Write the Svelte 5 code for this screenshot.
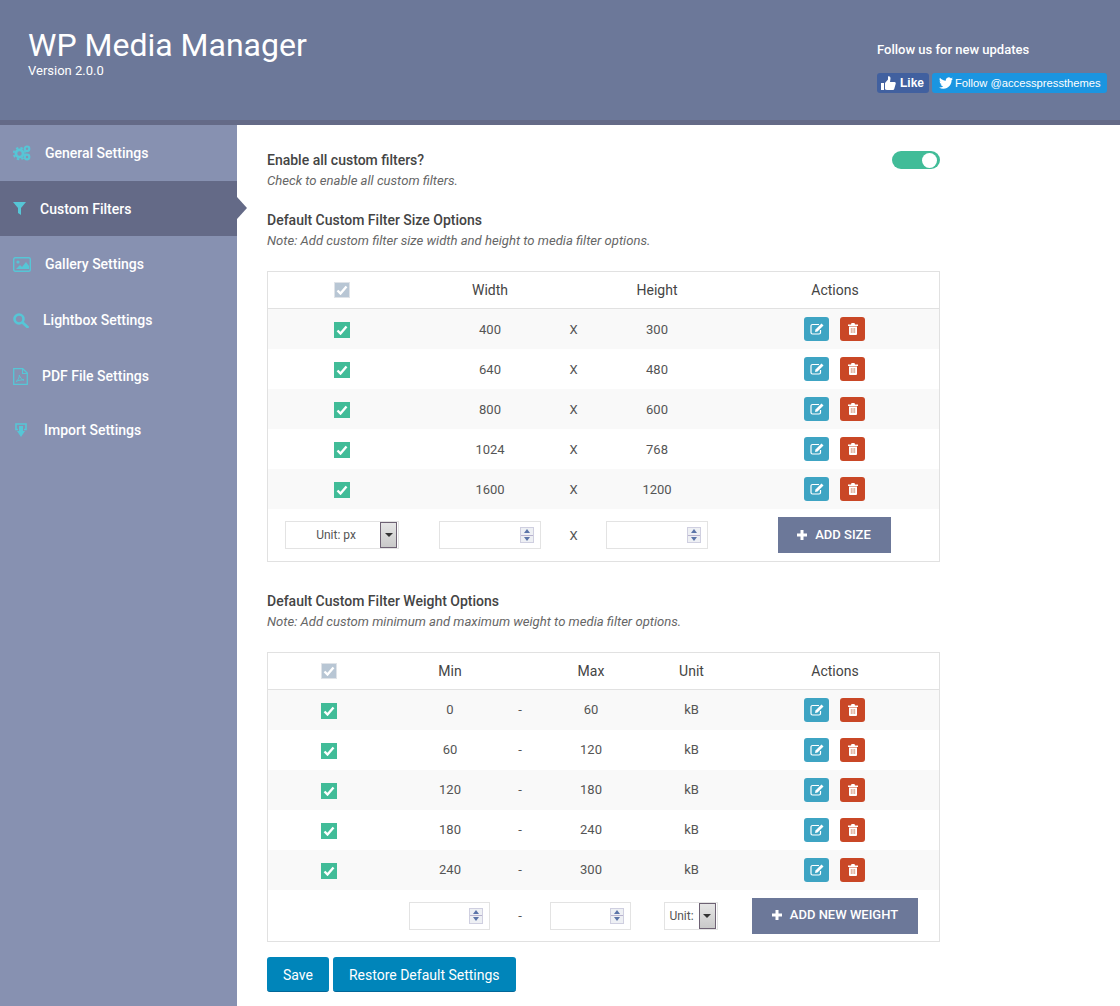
<script>
  const menu = [
    { label: 'General Settings', icon: 'cogs' },
    { label: 'Custom Filters', icon: 'filter', active: true },
    { label: 'Gallery Settings', icon: 'picture' },
    { label: 'Lightbox Settings', icon: 'search' },
    { label: 'PDF File Settings', icon: 'pdf' },
    { label: 'Import Settings', icon: 'import' }
  ];
  const sizes = [[400, 300], [640, 480], [800, 600], [1024, 768], [1600, 1200]];
  const weights = [[0, 60], [60, 120], [120, 180], [180, 240], [240, 300]];
</script>

{#snippet menuIcon(name)}
  {#if name === 'cogs'}
    <svg width="18" height="16" viewBox="0 0 18 16">
      <circle cx="6.5" cy="8.5" r="3.6" fill="none" stroke="#56c6d6" stroke-width="2.8" />
      <circle cx="6.5" cy="8.5" r="5.8" fill="none" stroke="#56c6d6" stroke-width="1.8" stroke-dasharray="2.4 2.2" />
      <circle cx="14" cy="3.800" r="2.300" fill="none" stroke="#56c6d6" stroke-width="2.200" />
      <circle cx="14" cy="12" r="2.300" fill="none" stroke="#56c6d6" stroke-width="2.200" />
    </svg>
  {:else if name === 'filter'}
    <svg width="13" height="13" viewBox="0 0 13 13"><path d="M0 0h13L8 6v7L5 11V6z" fill="#56c6d6" /></svg>
  {:else if name === 'picture'}
    <svg width="18" height="15" viewBox="0 0 18 15">
      <rect x=".7" y=".7" width="16.6" height="13.6" rx="1.5" fill="none" stroke="#56c6d6" stroke-width="1.4" />
      <circle cx="5" cy="5" r="1.6" fill="#56c6d6" />
      <path d="M3 12l4-4 2 2 4-5 3 4v3z" fill="#56c6d6" />
    </svg>
  {:else if name === 'search'}
    <svg width="16" height="15" viewBox="0 0 16 15">
      <circle cx="6" cy="6" r="4.500" fill="none" stroke="#56c6d6" stroke-width="2.600" />
      <path d="M9.500 9.500L14.500 14" stroke="#56c6d6" stroke-width="2.800" stroke-linecap="round" />
    </svg>
  {:else if name === 'pdf'}
    <svg width="15" height="17" viewBox="0 0 15 17">
      <path d="M.7.7h9l4.600 4.400v11.200H.7z" fill="none" stroke="#56c6d6" stroke-width="1.300" />
      <path d="M9.500 .7V5.500h4.800" fill="none" stroke="#56c6d6" stroke-width="1.100" />
      <path d="M3 13.500c2-1 3.500-4 3.300-6.500 1 3 2.500 4.500 4.700 5-2.500-.3-5.500.2-8 1.500z" fill="none" stroke="#56c6d6" stroke-width="1" />
    </svg>
  {:else}
    <svg width="12" height="14" viewBox="0 0 12 14">
      <path d="M3 6.500H1V1h10v5.500H9" fill="none" stroke="#56c6d6" stroke-width="1.600" />
      <path d="M4 3h4v5h2l-4 6-4-6h2z" fill="#56c6d6" />
    </svg>
  {/if}
{/snippet}

{#snippet check(head)}
  <span class="check" class:head>
    <svg width="12" height="10" viewBox="0 0 12 10"><path d="M1.500 5.500l3 3 6-7" fill="none" stroke="#fff" stroke-width="2.400" /></svg>
  </span>
{/snippet}

{#snippet actions()}
  <div class="actions">
    <button class="act edit" aria-label="Edit">
      <svg width="14" height="12" viewBox="0 0 14 12">
        <path d="M9 1.500H2.500A1.500 1.500 0 0 0 1 3v6.500A1.500 1.500 0 0 0 2.500 11H9a1.500 1.500 0 0 0 1.500-1.500V7" fill="none" stroke="#fff" stroke-width="1.200" />
        <path d="M11.500.5L13.500 2.500 7.500 8.500 5 9 5.500 6.500z" fill="#fff" />
      </svg>
    </button>
    <button class="act del" aria-label="Delete">
      <svg width="10" height="12" viewBox="0 0 10 12">
        <path d="M3.500 0h3l.5 1.500h3V3H0V1.500h3zM1 3.500h8V11a1 1 0 0 1-1 1H2a1 1 0 0 1-1-1z" fill="#fff" />
        <path d="M3.300 5v5M5 5v5M6.700 5v5" stroke="#d99a80" stroke-width=".9" />
      </svg>
    </button>
  </div>
{/snippet}

{#snippet spin(cls)}
  <div class="field {cls}">
    <input type="text" aria-label="value" />
    <span class="spin"><i class="up"></i><i class="down"></i></span>
  </div>
{/snippet}

{#snippet unitSelect(cls, text)}
  <div class="select {cls}">
    <span class="sel-text">{text}</span>
    <span class="sel-btn"><i></i></span>
  </div>
{/snippet}

{#snippet plus()}
  <svg class="plus" width="10" height="10" viewBox="0 0 10 10"><path d="M3.500 0h3v3.500H10v3H6.500V10h-3V6.500H0v-3h3.500z" fill="#fff" /></svg>
{/snippet}

<div class="page">
  <header class="top">
    <div class="brand">
      <h1>WP Media Manager</h1>
      <div class="version">Version 2.0.0</div>
    </div>
    <div class="follow">
      <div class="follow-title">Follow us for new updates</div>
      <div class="badges">
        <span class="like">
          <svg width="15" height="15" viewBox="0 0 15 15"><path d="M0 7h3v7H0zM4 7l3-3.500V0.500c1.500-.5 2.500.5 2.500 2L9 6h4.500c1 0 1.500 1 1.200 1.800l-1.500 5.200c-.2.700-.8 1-1.500 1H6c-.8 0-1.400-.3-2-.8z" fill="#fff" /></svg>
          Like
        </span>
        <span class="tw">
          <svg width="14" height="12" viewBox="0 0 24 20"><path d="M23.953 2.570a10 10 0 01-2.825.775 4.958 4.958 0 002.163-2.723c-.951.555-2.005.959-3.127 1.184a4.920 4.920 0 00-8.384 4.482C7.690 6.095 4.067 4.130 1.640 1.162a4.822 4.822 0 00-.666 2.475c0 1.710.870 3.213 2.188 4.096a4.904 4.904 0 01-2.228-.616v.060a4.923 4.923 0 003.946 4.827 4.996 4.996 0 01-2.212.085 4.936 4.936 0 004.604 3.417 9.867 9.867 0 01-6.102 2.105c-.390 0-.779-.023-1.170-.067a13.995 13.995 0 007.557 2.209c9.053 0 13.998-7.496 13.998-13.985 0-.210 0-.420-.015-.630A9.935 9.935 0 0024 2.590z" fill="#fff" /></svg>
          Follow @accesspressthemes
        </span>
      </div>
    </div>
  </header>

  <div class="body">
    <nav class="side">
      {#each menu as item}
        <a class="item" class:active={item.active} href="#top">
          {@render menuIcon(item.icon)}
          <span>{item.label}</span>
        </a>
      {/each}
    </nav>

    <main class="main">
      <div class="enable">
        <div>
          <h3>Enable all custom filters?</h3>
          <p class="note">Check to enable all custom filters.</p>
        </div>
        <span class="toggle"><i></i></span>
      </div>

      <h3 class="sec">Default Custom Filter Size Options</h3>
      <p class="note">Note: Add custom filter size width and height to media filter options.</p>

      <table class="grid size">
        <colgroup><col class="c148" /><col class="c148" /><col class="c19" /><col class="c148" /><col class="c208" /></colgroup>
        <thead>
          <tr><th>{@render check(true)}</th><th>Width</th><th></th><th>Height</th><th>Actions</th></tr>
        </thead>
        <tbody>
          {#each sizes as [w, h]}
            <tr><td>{@render check(false)}</td><td>{w}</td><td>X</td><td>{h}</td><td>{@render actions()}</td></tr>
          {/each}
        </tbody>
        <tfoot>
          <tr>
            <td>{@render unitSelect('sel-px', 'Unit: px')}</td>
            <td>{@render spin('f102')}</td>
            <td>X</td>
            <td>{@render spin('f102')}</td>
            <td><button class="add w113">{@render plus()}ADD SIZE</button></td>
          </tr>
        </tfoot>
      </table>

      <h3 class="sec second">Default Custom Filter Weight Options</h3>
      <p class="note">Note: Add custom minimum and maximum weight to media filter options.</p>

      <table class="grid weight">
        <colgroup><col class="c122" /><col class="c120" /><col class="c20" /><col class="c122" /><col class="c79" /><col class="c208" /></colgroup>
        <thead>
          <tr><th>{@render check(true)}</th><th>Min</th><th></th><th>Max</th><th>Unit</th><th>Actions</th></tr>
        </thead>
        <tbody>
          {#each weights as [min, max]}
            <tr><td>{@render check(false)}</td><td>{min}</td><td>-</td><td>{max}</td><td>kB</td><td>{@render actions()}</td></tr>
          {/each}
        </tbody>
        <tfoot>
          <tr>
            <td></td>
            <td>{@render spin('f81')}</td>
            <td>-</td>
            <td>{@render spin('f81')}</td>
            <td>{@render unitSelect('sel-unit', 'Unit:')}</td>
            <td><button class="add w166">{@render plus()}ADD NEW WEIGHT</button></td>
          </tr>
        </tfoot>
      </table>

      <div class="save">
        <button class="primary">Save</button>
        <button class="primary">Restore Default Settings</button>
      </div>
    </main>
  </div>
</div>

<style>
  :global(body) {
    margin: 0;
    font-family: Roboto, "Liberation Sans", sans-serif;
    background: #fff;
  }
  .page {
    min-height: 1006px;
    display: flex;
    flex-direction: column;
    overflow: hidden;
  }
  .top {
    height: 120px;
    background: #6c7899;
    border-bottom: 5px solid #646a87;
    display: flex;
    justify-content: space-between;
    color: #fff;
  }
  .brand {
    padding: 26px 0 0 28px;
  }
  h1 {
    margin: 0;
    font-size: 32px;
    line-height: 39px;
    font-weight: 400;
  }
  .version {
    font-size: 13px;
    line-height: 12px;
    font-weight: 400;
  }
  .follow {
    width: 243px;
    padding-top: 42px;
  }
  .follow-title {
    font-size: 13px;
    line-height: 16px;
    font-weight: 500;
  }
  .badges {
    display: flex;
    gap: 3px;
    margin-top: 15px;
    font-family: "Liberation Sans", Arial, sans-serif;
  }
  .like, .tw {
    height: 20px;
    border-radius: 3px;
    display: inline-flex;
    align-items: center;
    white-space: nowrap;
  }
  .like {
    width: 52px;
    background: #41609f;
    font-size: 12px;
    font-weight: 700;
    gap: 4px;
    padding-left: 4px;
    box-sizing: border-box;
  }
  .tw {
    width: 175px;
    background: #1b95e0;
    font-size: 11.2px;
    gap: 2px;
    padding-left: 7px;
    box-sizing: border-box;
  }

  .body {
    flex: 1;
    display: flex;
  }
  .side {
    width: 237px;
    flex: none;
    background: #8791b1;
  }
  .item {
    position: relative;
    height: 56px;
    box-sizing: border-box;
    display: flex;
    align-items: center;
    gap: 14px;
    padding-left: 13px;
    color: #fff;
    font-size: 14px;
    font-weight: 500;
    text-decoration: none;
  }
  .item.active {
    height: 55px;
    background: #646a87;
  }
  .item.active::after {
    content: "";
    position: absolute;
    left: 237px;
    top: 16px;
    border-left: 10px solid #646a87;
    border-top: 11px solid transparent;
    border-bottom: 11px solid transparent;
  }
  .item:last-child {
    height: 52px;
    padding-left: 15px;
    gap: 17px;
  }

  .main {
    width: 673px;
    padding: 25px 0 14px 30px;
    color: #444;
  }
  .enable {
    display: flex;
    justify-content: space-between;
    align-items: flex-start;
  }
  h3 {
    margin: 0;
    font-size: 14px;
    line-height: 20px;
    font-weight: 500;
    color: #444;
  }
  .note {
    margin: 2px 0 0;
    font-size: 13.1px;
    line-height: 18px;
    font-style: italic;
    color: #666;
  }
  .sec {
    margin-top: 20px;
  }
  .sec.second {
    margin-top: 29px;
  }
  .toggle {
    width: 48px;
    height: 18px;
    margin-top: 1px;
    border-radius: 9px;
    background: #41bc98;
    display: flex;
    justify-content: flex-end;
    align-items: center;
    padding-right: 3px;
    box-sizing: border-box;
  }
  .toggle i {
    width: 15px;
    height: 15px;
    border-radius: 50%;
    background: #fff;
  }

  .grid {
    width: 673px;
    margin-top: 21px;
    border-collapse: separate;
    border-spacing: 0;
    border: 1px solid #e1e1e1;
    table-layout: fixed;
    font-size: 13px;
    color: #555;
    text-align: center;
  }
  .c148 { width: 148px; }
  .c19 { width: 19px; }
  .c208 { width: 208px; }
  .c122 { width: 122px; }
  .c120 { width: 120px; }
  .c20 { width: 20px; }
  .c79 { width: 79px; }
  th, td {
    padding: 0;
    text-align: center;
    vertical-align: middle;
    box-sizing: border-box;
  }
  th {
    height: 37px;
    border-bottom: 1px solid #e1e1e1;
    font-size: 14px;
    font-weight: 400;
    color: #444;
  }
  tbody td {
    height: 40px;
  }
  tbody tr:nth-child(odd) {
    background: #f9f9f9;
  }
  .weight tbody td:not(:first-child):not(:last-child) {
    padding-bottom: 2px;
  }
  .size tfoot td {
    height: 52px;
  }
  .weight tfoot td {
    height: 51px;
  }
  .check {
    display: flex;
    align-items: center;
    justify-content: center;
    width: 16px;
    height: 16px;
    margin: 0 auto;
    background: #41bc98;
    box-sizing: border-box;
  }
  tbody .check {
    margin-top: 2px;
  }
  .check.head {
    background: #b8c6d4;
    border: 1px solid #dfe3e8;
  }
  .actions {
    display: flex;
    justify-content: center;
    gap: 11px;
    padding-right: 1px;
  }
  .act {
    width: 25px;
    height: 24px;
    border: 0;
    padding: 0;
    border-radius: 3px;
    display: flex;
    align-items: center;
    justify-content: center;
  }
  .edit { background: #3ea4c3; }
  .del { background: #c94726; }

  .field, .select {
    display: inline-flex;
    align-items: center;
    height: 28px;
    box-sizing: border-box;
    border: 1px solid #e3e3e3;
    background: #fff;
    vertical-align: middle;
  }
  .f102 { width: 102px; }
  .f81 {
    width: 81px;
    margin-right: 2px;
  }
  .field input {
    flex: 1;
    min-width: 0;
    height: 100%;
    border: 0;
    padding: 0;
    outline: 0;
    background: transparent;
  }
  .spin {
    width: 14px;
    height: 16px;
    margin-right: 6px;
    display: flex;
    flex-direction: column;
    border: 1px solid #cfcfe0;
    box-sizing: border-box;
    background: #eef0f4;
  }
  .spin i {
    flex: 1;
    display: flex;
    align-items: center;
    justify-content: center;
  }
  .spin i::before {
    content: "";
    border-left: 3.500px solid transparent;
    border-right: 3.500px solid transparent;
  }
  .spin .up {
    border-bottom: 1px solid #b9b3cf;
  }
  .spin .up::before {
    border-bottom: 4px solid #5b74a8;
  }
  .spin .down::before {
    border-top: 4px solid #5b74a8;
  }
  .select {
    font-size: 12px;
    color: #555;
    padding-right: 1px;
  }
  .sel-px {
    width: 114px;
    padding-left: 6px;
  }
  .sel-unit {
    width: 54px;
    margin-right: 2px;
  }
  .sel-text {
    flex: 1;
    text-align: center;
    white-space: nowrap;
  }
  .sel-btn {
    width: 17px;
    height: 26px;
    box-sizing: border-box;
    border: 1px solid #6e6274;
    background: linear-gradient(#e6e6e6, #c9c9c9);
    display: flex;
    align-items: center;
    justify-content: center;
  }
  .sel-btn i {
    border-left: 4px solid transparent;
    border-right: 4px solid transparent;
    border-top: 4px solid #333;
  }
  .add {
    height: 36px;
    border: 0;
    padding: 0 0 2px;
    background: #6c7899;
    color: #fff;
    font-family: inherit;
    font-size: 13px;
    font-weight: 500;
  }
  .w113 {
    width: 113px;
    margin-right: 2px;
  }
  .w166 { width: 166px; }
  .plus {
    margin-right: 8px;
    vertical-align: -1px;
  }
  .save {
    display: flex;
    gap: 4px;
    margin-top: 15px;
  }
  .primary {
    height: 35px;
    padding: 2px 16px 0;
    border: 0;
    border-bottom: 1px solid #006799;
    border-radius: 3px;
    background: #0085ba;
    color: #fff;
    font-family: inherit;
    font-size: 14px;
    font-weight: 400;
  }
</style>
